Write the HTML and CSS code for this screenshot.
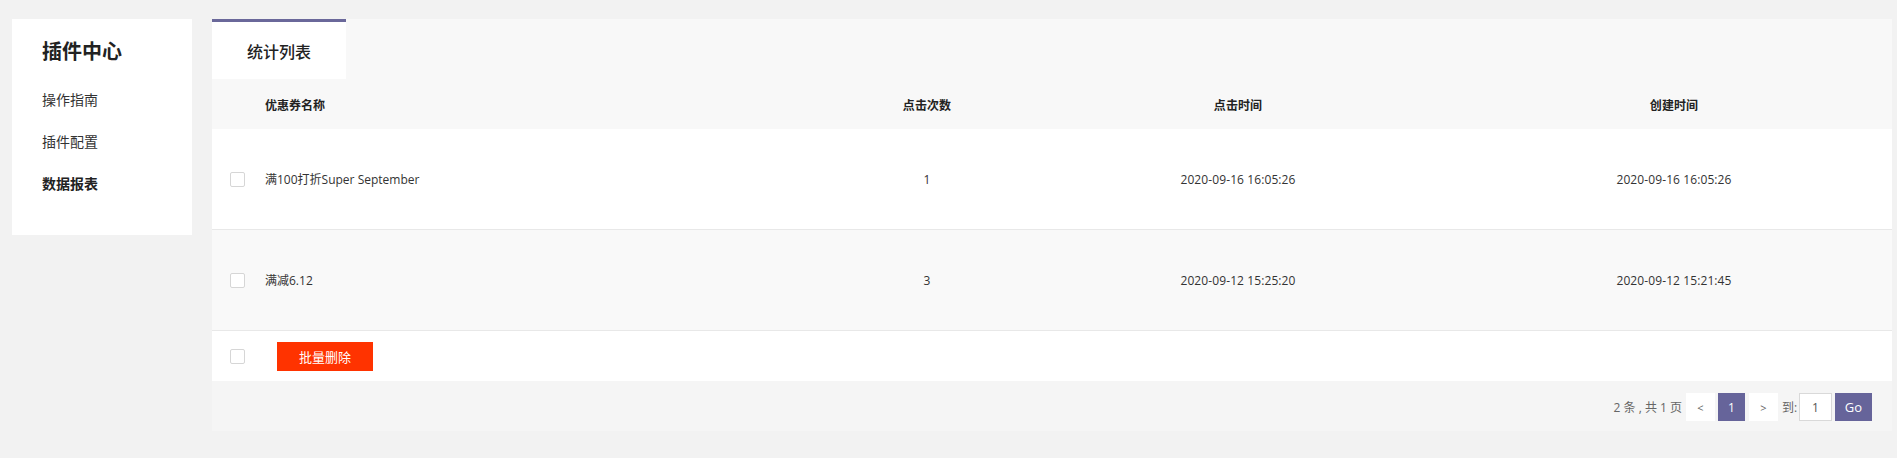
FILE: index.html
```html
<!DOCTYPE html>
<html lang="zh-CN">
<head>
<meta charset="utf-8">
<title>统计列表</title>
<link rel="stylesheet" href="styles.css">
</head>
<body>
<div class="page">
  <aside class="sidebar">
    <div class="side-title">插件中心</div>
    <div class="side-item">操作指南</div>
    <div class="side-item">插件配置</div>
    <div class="side-item active">数据报表</div>
  </aside>
  <main class="main">
    <div class="tabbar">
      <div class="tab">统计列表</div>
    </div>
    <div class="table">
      <div class="row head">
        <div class="cell chk"></div>
        <div class="cell name">优惠券名称</div>
        <div class="cell center">点击次数</div>
        <div class="cell center">点击时间</div>
        <div class="cell center">创建时间</div>
      </div>
      <div class="row body">
        <div class="cell chk"><span class="checkbox"></span></div>
        <div class="cell name">满100打折Super September</div>
        <div class="cell center">1</div>
        <div class="cell center">2020-09-16 16:05:26</div>
        <div class="cell center">2020-09-16 16:05:26</div>
      </div>
      <div class="row body alt">
        <div class="cell chk"><span class="checkbox"></span></div>
        <div class="cell name">满减6.12</div>
        <div class="cell center">3</div>
        <div class="cell center">2020-09-12 15:25:20</div>
        <div class="cell center">2020-09-12 15:21:45</div>
      </div>
      <div class="row foot">
        <div class="cell chk"><span class="checkbox"></span></div>
        <div class="cell"><button class="del-btn">批量删除</button></div>
      </div>
    </div>
    <div class="pager">
      <span class="total">2 条 , 共 1 页</span>
      <span class="pg-btn">&lt;</span>
      <span class="pg-btn current">1</span>
      <span class="pg-btn">&gt;</span>
      <span class="goto">到:</span>
      <span class="pg-input">1</span>
      <span class="go-btn">Go</span>
    </div>
  </main>
</div>
</body>
</html>
```
FILE: styles.css
```css
* { box-sizing: border-box; }
html, body { margin: 0; padding: 0; }
body {
  background: #f2f2f2;
  font-family: "Open Sans", "Noto Sans CJK SC", sans-serif;
  color: #333;
  width: 1897px;
  height: 458px;
  overflow: hidden;
}
.page {
  display: flex;
  align-items: flex-start;
  gap: 20px;
  padding: 19px 0 0 12px;
}
.sidebar {
  width: 180px;
  height: 216px;
  background: #fff;
  padding: 18px 0 0 30px;
}
.side-title {
  font-family: "Noto Sans CJK SC", sans-serif;
  font-size: 20px;
  font-weight: 700;
  line-height: 28px;
  color: #222;
  margin-bottom: 13px;
}
.side-item {
  font-family: "Noto Sans CJK SC", sans-serif;
  font-size: 14px;
  line-height: 42px;
  color: #333;
}
.side-item.active { font-weight: 700; color: #222; }
.main {
  width: 1680px;
  background: #f5f5f5;
}
.tabbar {
  height: 60px;
  background: #f8f8f8;
  display: flex;
}
.tab {
  width: 134px;
  background: #fff;
  border-top: 3px solid #6a689a;
  font-family: "Noto Sans CJK SC", sans-serif;
  font-size: 16px;
  font-weight: 500;
  color: #222;
  display: flex;
  align-items: center;
  justify-content: center;
}
.row {
  display: grid;
  grid-template-columns: 51px 571px 186px 436px 436px;
  align-items: center;
  font-size: 12px;
  color: #333;
}
.row.head {
  height: 50px;
  background: #f8f8f8;
  font-family: "Noto Sans CJK SC", sans-serif;
  font-weight: 700;
  color: #222;
}
.row.body {
  height: 101px;
  background: #fff;
  border-bottom: 1px solid #e8e8e8;
}
.row.body.alt { background: #f9f9f9; }
.row.foot {
  height: 50px;
  background: #fff;
}
.cell.chk {
  display: flex;
  justify-content: center;
}
.cell.name { padding-left: 2px; }
.cell.center { text-align: center; letter-spacing: 0.1px; }
.checkbox {
  display: block;
  width: 15px;
  height: 15px;
  border: 1px solid #d6d6d6;
  border-radius: 2px;
  background: #fff;
}
.del-btn {
  margin-left: 14px;
  width: 96px;
  height: 29px;
  border: 0;
  background: #ff3300;
  color: #fff;
  font-family: "Noto Sans CJK SC", sans-serif;
  font-size: 13px;
  padding: 0;
  display: block;
}
.pager {
  height: 50px;
  background: #f5f5f5;
  display: flex;
  align-items: center;
  justify-content: flex-end;
  padding: 2px 20px 0 0;
  font-size: 12px;
  color: #666;
}
.total { margin-right: 4px; }
.pg-btn {
  width: 29px;
  height: 28px;
  background: #fff;
  display: flex;
  align-items: center;
  justify-content: center;
  color: #666;
  font-size: 11px;
  margin-right: 3px;
}
.pg-btn.current {
  width: 27px;
  background: #66649a;
  color: #fff;
  font-size: 12px;
  margin-right: 4px;
}
.goto { margin-left: 1px; width: 17px; white-space: nowrap; }
.pg-input {
  width: 33px;
  height: 28px;
  border: 1px solid #d9d9d9;
  background: #fff;
  display: flex;
  align-items: center;
  justify-content: center;
  color: #555;
  margin-right: 3px;
}
.go-btn {
  width: 37px;
  height: 28px;
  background: #66649a;
  color: #fff;
  font-size: 13px;
  display: flex;
  align-items: center;
  justify-content: center;
}
```
